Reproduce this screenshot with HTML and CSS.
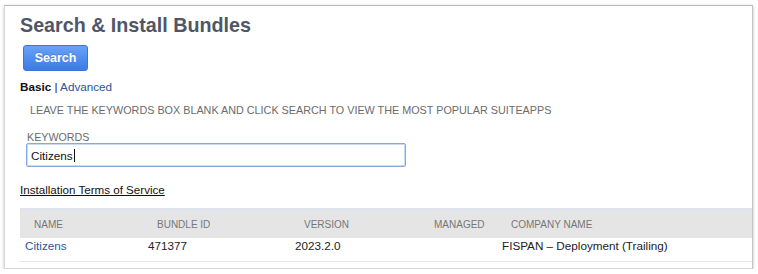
FILE: index.html
```html
<!DOCTYPE html>
<html lang="en">
<head>
    <meta charset="UTF-8">
    <meta name="viewport" content="width=device-width, initial-scale=1.0">
    <title>Search &amp; Install Bundles</title>
    <link rel="stylesheet" href="styles.css">
</head>
<body>
    <div class="frame">
        <h1 class="title">Search &amp; Install Bundles</h1>
        <button class="button">Search</button>

        <div class="tabs"><strong>Basic</strong> | <a href="#" class="link">Advanced</a></div>

        <p class="hint">Leave the keywords box blank and click search to view the most popular SuiteApps</p>

        <div class="field">
            <label class="field-label" for="keywords">Keywords</label>
            <div class="input" id="keywords">Citizens<span class="caret"></span></div>
        </div>

        <a href="#" class="terms">Installation Terms of Service</a>

        <table class="results">
            <thead>
                <tr>
                    <th class="col-name">Name</th>
                    <th class="col-id">Bundle ID</th>
                    <th class="col-version">Version</th>
                    <th class="col-managed">Managed</th>
                    <th>Company Name</th>
                </tr>
            </thead>
            <tbody>
                <tr>
                    <td><a href="#" class="link">Citizens</a></td>
                    <td>471377</td>
                    <td>2023.2.0</td>
                    <td></td>
                    <td>FISPAN – Deployment (Trailing)</td>
                </tr>
            </tbody>
        </table>
    </div>
</body>
</html>
```

FILE: styles.css
```css
:root {
    --title-color: #4f5668;
    --link-color: #2a5599;
    --muted-color: #6b6b6b;
    --header-bg: #e5e5e5;
}

* {
    box-sizing: border-box;
    margin: 0;
    padding: 0;
}

body {
    font-family: "Liberation Sans", Arial, sans-serif;
    background-color: #fff;
    color: #222;
}

.frame {
    width: 749px;
    height: 264px;
    margin: 5px 0 0 4px;
    padding-left: 15px;
    border: 1px solid #d6d6d6;
    border-top-color: #b9b9b9;
    border-right-color: #c4c4c4;
    box-shadow: 0 1px 3px rgba(0, 0, 0, 0.25);
    display: flex;
    flex-direction: column;
    align-items: flex-start;
    overflow: hidden;
}

.title {
    margin-top: 8px;
    font-size: 19.7px;
    line-height: 23px;
    font-weight: bold;
    color: var(--title-color);
}

.button {
    margin: 8px 0 0 3px;
    width: 65px;
    height: 26px;
    font-family: inherit;
    font-size: 12.5px;
    font-weight: bold;
    color: #fff;
    background: linear-gradient(#69a2f7, #3b7ae6);
    border: 1px solid #3a74dc;
    border-radius: 3px;
    text-shadow: 0 -1px 0 rgba(0, 0, 0, 0.15);
    cursor: pointer;
}

.tabs {
    margin-top: 9px;
    font-size: 11.7px;
    line-height: 14px;
    color: #222;
}

.tabs strong {
    color: #111;
}

.link {
    color: var(--link-color);
    text-decoration: none;
}

.hint {
    margin: 10px 0 0 10px;
    font-size: 10.8px;
    line-height: 13px;
    text-transform: uppercase;
    color: var(--muted-color);
}

.field {
    margin: 14px 0 0 6px;
    display: flex;
    flex-direction: column;
}

.field-label {
    margin-left: 1px;
    font-size: 10.7px;
    line-height: 12px;
    text-transform: uppercase;
    color: var(--muted-color);
}

.input {
    width: 380px;
    height: 24px;
    padding-left: 4px;
    display: flex;
    align-items: center;
    font-size: 11.7px;
    color: #111;
    border: 1px solid #86a9e2;
    box-shadow: inset 0 0 0 1px #cbdaf4;
    border-radius: 2px;
}

.caret {
    width: 1px;
    height: 13px;
    margin-left: 1px;
    background-color: #111;
}

.terms {
    margin-top: 16px;
    font-size: 11.6px;
    line-height: 14px;
    color: #111;
    text-decoration: underline;
}

.results {
    margin-top: 11px;
    align-self: stretch;
    border-collapse: collapse;
    table-layout: fixed;
}

.results th {
    height: 28px;
    padding: 0 0 0 14px;
    text-align: left;
    font-weight: normal;
    font-size: 10px;
    text-transform: uppercase;
    color: #777;
    background-color: var(--header-bg);
    border-top: 3px solid #dfe3ec;
}

.results td {
    height: 24px;
    padding: 0 0 7px 5px;
    font-size: 11.7px;
    color: #222;
    border-bottom: 1px solid #e8e8e8;
}

.col-name { width: 123px; }
.col-id { width: 147px; }
.col-version { width: 130px; }
.col-managed { width: 77px; }
```
